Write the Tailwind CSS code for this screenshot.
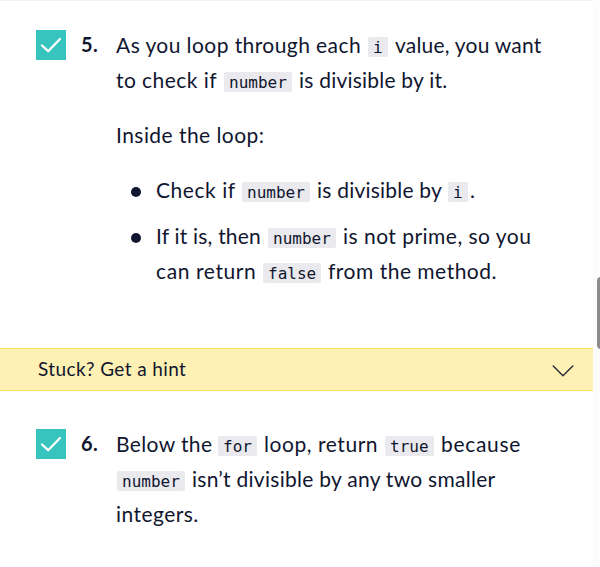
<!DOCTYPE html>
<html lang="en">
<head>
<meta charset="utf-8">
<title>Instructions</title>
<script src="https://cdn.jsdelivr.net/npm/@tailwindcss/browser@4"></script>
</head>
<body class="flex h-[567px] w-[600px] overflow-hidden bg-[#fcfcfc] font-['Lato',sans-serif] text-[21px] leading-[35px] tracking-[0.45px] text-[#10162f]">
<main class="h-full w-[593px] border-t border-[#f2f2f2] bg-white whitespace-nowrap">
  <section class="flex h-[347px] pt-[26px] pl-9">
    <div class="mt-[3px] size-[30px] shrink-0 bg-[#37c3be]"><svg class="size-[30px]" viewBox="0 0 30 30" fill="none" stroke="#fff" stroke-width="2.3" stroke-linecap="round" stroke-linejoin="round"><path d="M6 15.5L12.2 21.2L24 9"/></svg></div>
    <b class="ml-[15px] w-[35px] shrink-0 text-[20px] font-bold tracking-[0.5px]">5.</b>
    <div>
      <p class="flex"><span class="w-[252px] tracking-[0.42px]">As you loop through each</span><code class="mt-[10px] mr-[7px] h-5 w-5 rounded-[2px] bg-[#eae9ed] px-[5px] font-['DejaVu_Sans_Mono',monospace] text-[16px] leading-[21px] tracking-normal">i</code><span class="tracking-[0.2px]">value, you want</span></p>
      <p class="flex"><span class="w-[108px] tracking-[0.45px]">to check if</span><code class="mt-[10px] mr-[7px] h-5 w-[68px] rounded-[2px] bg-[#eae9ed] px-[5px] font-['DejaVu_Sans_Mono',monospace] text-[16px] leading-[21px] tracking-normal">number</code><span class="tracking-[0.22px]">is divisible by it.</span></p>
      <p class="mt-5">Inside the loop:</p>
      <ul class="mt-5 pl-10">
        <li class="relative flex before:absolute before:top-[15px] before:-left-[25px] before:size-[10px] before:rounded-full before:bg-[#10162f] before:content-['']"><span class="w-[86px] tracking-[0.55px]">Check if</span><code class="mt-[10px] mr-[7px] h-5 w-[68px] rounded-[2px] bg-[#eae9ed] px-[5px] font-['DejaVu_Sans_Mono',monospace] text-[16px] leading-[21px] tracking-normal">number</code><span class="w-[131px] tracking-[0.22px]">is divisible by</span><code class="mt-[10px] mr-[2px] h-5 w-5 rounded-[2px] bg-[#eae9ed] px-[5px] font-['DejaVu_Sans_Mono',monospace] text-[16px] leading-[21px] tracking-normal">i</code><span>.</span></li>
        <li class="relative mt-[11px] before:absolute before:top-[15px] before:-left-[25px] before:size-[10px] before:rounded-full before:bg-[#10162f] before:content-['']"><div class="flex"><span class="w-[112px] tracking-[0.2px]">If it is, then</span><code class="mt-[10px] mr-[7px] h-5 w-[68px] rounded-[2px] bg-[#eae9ed] px-[5px] font-['DejaVu_Sans_Mono',monospace] text-[16px] leading-[21px] tracking-normal">number</code><span class="tracking-[0.48px]">is not prime, so you</span></div><div class="flex"><span class="w-[107px] tracking-[0.6px]">can return</span><code class="mt-[10px] mr-[7px] h-5 w-[58px] rounded-[2px] bg-[#eae9ed] px-[5px] font-['DejaVu_Sans_Mono',monospace] text-[16px] leading-[21px] tracking-normal">false</code><span class="tracking-[0.5px]">from the method.</span></div></li>
      </ul>
    </div>
  </section>
  <div class="flex h-[43px] items-center justify-between border-y border-[#ffe14f] bg-[#fff0b3] pr-[19px] pl-[38px] text-[19px] tracking-[0.4px]"><span class="-mt-[2px]">Stuck? Get a hint</span><svg class="mt-[3px] h-3 w-[22px]" viewBox="0 0 22 12" fill="none" stroke="#29283a" stroke-width="1.4" stroke-linecap="round" stroke-linejoin="round"><path d="M1.2 1L11 10.8L20.8 1"/></svg></div>
  <section class="flex pt-[35px] pl-9">
    <div class="mt-[3px] size-[30px] shrink-0 bg-[#37c3be]"><svg class="size-[30px]" viewBox="0 0 30 30" fill="none" stroke="#fff" stroke-width="2.3" stroke-linecap="round" stroke-linejoin="round"><path d="M6 15.5L12.2 21.2L24 9"/></svg></div>
    <b class="ml-[15px] w-[35px] shrink-0 text-[20px] font-bold tracking-[0.5px]">6.</b>
    <div>
      <p class="flex"><span class="w-[102px] tracking-[0.38px]">Below the</span><code class="mt-[10px] mr-[7px] h-5 w-[39px] rounded-[2px] bg-[#eae9ed] px-[5px] font-['DejaVu_Sans_Mono',monospace] text-[16px] leading-[21px] tracking-normal">for</code><span class="w-[121px] tracking-[0.55px]">loop, return</span><code class="mt-[10px] mr-[7px] h-5 w-[49px] rounded-[2px] bg-[#eae9ed] px-[5px] font-['DejaVu_Sans_Mono',monospace] text-[16px] leading-[21px] tracking-normal">true</code><span class="tracking-[0.7px]">because</span></p>
      <p class="flex pl-px"><code class="mt-[10px] mr-[7px] h-5 w-[68px] rounded-[2px] bg-[#eae9ed] px-[5px] font-['DejaVu_Sans_Mono',monospace] text-[16px] leading-[21px] tracking-normal">number</code><span class="tracking-[0.27px]">isn’t divisible by any two smaller</span></p>
      <p>integers.</p>
    </div>
  </section>
</main>
<div class="flex-1 overflow-hidden pt-[277px] pl-1"><div class="h-[72px] w-2 rounded-[4px] bg-[#8b8b8b]"></div></div>
</body>
</html>
